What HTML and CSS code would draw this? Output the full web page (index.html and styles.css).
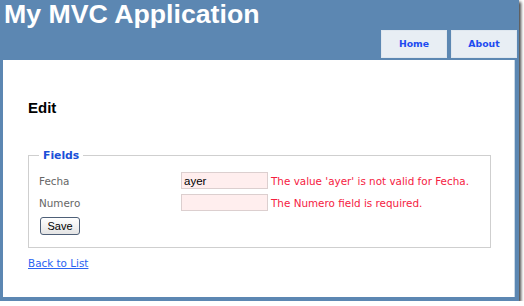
FILE: index.html
```html
<!DOCTYPE html>
<html lang="en">
<head>
  <meta charset="UTF-8">
  <title>Edit</title>
  <link rel="stylesheet" href="styles.css">
</head>
<body>
  <div class="page">
    <!-- Header -->
    <div class="header">
      <h1 class="title">My MVC Application</h1>
      <ul class="menu">
        <li><a href="#">Home</a></li>
        <li><a href="#">About</a></li>
      </ul>
    </div>

    <!-- Main -->
    <div class="main">
      <h2>Edit</h2>
      <form>
        <fieldset>
          <legend>Fields</legend>
          <div class="field">
            <label for="fecha">Fecha</label>
            <input type="text" id="fecha" class="input-error" value="ayer">
            <span class="error">The value 'ayer' is not valid for Fecha.</span>
          </div>
          <div class="field">
            <label for="numero">Numero</label>
            <input type="text" id="numero" class="input-error" value="">
            <span class="error">The Numero field is required.</span>
          </div>
          <button type="button" class="save">Save</button>
        </fieldset>
      </form>
      <div class="back">
        <a href="#">Back to List</a>
      </div>
    </div>
  </div>
</body>
</html>
```

FILE: styles.css
```css
body {
  margin: 0;
  background: #fff;
  font-family: "DejaVu Sans", Verdana, sans-serif;
  font-size: 10.4px;
}

.page {
  width: 519px;
  height: 301px;
  background: #5c87b2;
  box-shadow: 2px 2px 3px rgba(0, 0, 0, 0.75);
  display: flex;
  flex-direction: column;
}

.header {
  height: 60px;
  display: flex;
  flex-direction: column;
}

.title {
  margin: 0;
  height: 30px;
  padding-left: 4px;
  font: bold 26.7px/28px "Liberation Sans", Arial, sans-serif;
  color: #fff;
}

.menu {
  list-style: none;
  margin: 0;
  padding: 0 2px 0 0;
  display: flex;
  justify-content: flex-end;
  gap: 4px;
}

.menu a {
  display: block;
  width: 64px;
  height: 26px;
  line-height: 26px;
  border: 1px solid #dfe7ef;
  background: #e8eef4;
  color: #1d4bf0;
  font-weight: bold;
  font-size: 9.3px;
  text-align: center;
  text-decoration: none;
}

.main {
  flex: 1;
  background: #fff;
  margin: 0 4px 4px 3px;
  padding: 0 25px;
  border-right: 1px solid #c9d8e6;
}

h2 {
  margin: 39px 0 0;
  font: bold 15px/18px "Liberation Sans", Arial, sans-serif;
  color: #000;
}

fieldset {
  box-sizing: border-box;
  width: 463px;
  margin: 32px 0 0;
  padding: 10px 10px 12px;
  border: 1px solid #cfcfcf;
}

legend {
  padding: 0 4px;
  font-weight: bold;
  font-size: 10.8px;
  color: #1a50d8;
}

.field {
  display: flex;
  align-items: center;
  margin-bottom: 5px;
}

.field label {
  width: 142px;
  color: #666;
}

.input-error {
  box-sizing: border-box;
  width: 87px;
  height: 17px;
  margin: 0;
  padding: 0 2px;
  border: 1px solid #dccfcf;
  background: #ffeeee;
  font: 11.5px "Liberation Sans", Arial, sans-serif;
  color: #000;
}

.error {
  margin-left: 3px;
  color: #f5213f;
}

.save {
  margin: 1px 0 0 1px;
  width: 40px;
  height: 18px;
  padding: 0;
  border: 1px solid #4e5f77;
  border-radius: 3px;
  background: linear-gradient(#ffffff, #e4e4e4);
  font: 11px "Liberation Sans", Arial, sans-serif;
  color: #000;
}

.back {
  margin-top: 9px;
  line-height: 13px;
}

.back a {
  color: #2a63f2;
}
```
